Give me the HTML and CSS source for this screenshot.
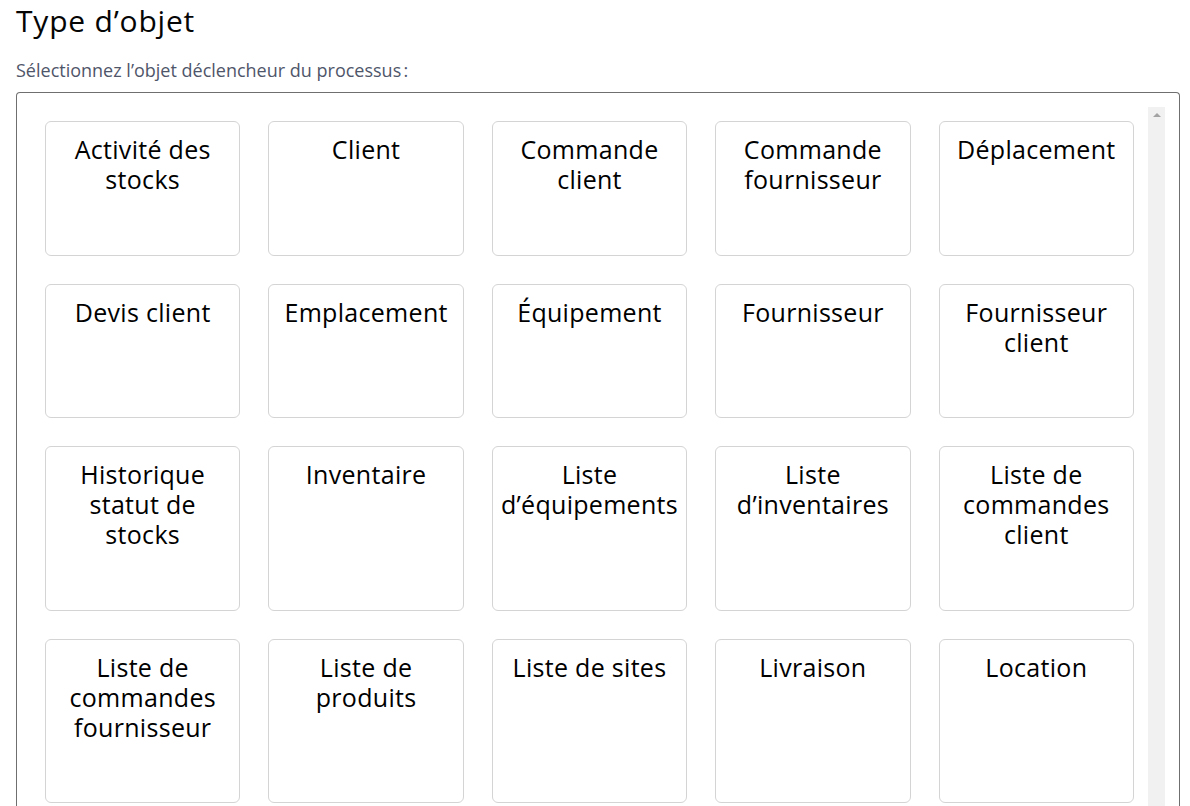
FILE: index.html
```html
<!DOCTYPE html>
<html lang="fr">
<head>
<meta charset="utf-8">
<title>Type d’objet</title>
<link rel="stylesheet" href="styles.css">
</head>
<body>
<div class="page">
  <h1 class="title">Type d’objet</h1>
  <p class="subtitle">Sélectionnez l’objet déclencheur du processus&#8239;:</p>
  <div class="picker">
    <div class="scroller">
      <div class="grid">
        <div class="card">Activité des stocks</div>
        <div class="card">Client</div>
        <div class="card">Commande client</div>
        <div class="card">Commande fournisseur</div>
        <div class="card">Déplacement</div>
        <div class="card">Devis client</div>
        <div class="card">Emplacement</div>
        <div class="card">Équipement</div>
        <div class="card">Fournisseur</div>
        <div class="card">Fournisseur client</div>
        <div class="card">Historique statut de stocks</div>
        <div class="card">Inventaire</div>
        <div class="card">Liste d’équipements</div>
        <div class="card">Liste d’inventaires</div>
        <div class="card">Liste de commandes client</div>
        <div class="card">Liste de commandes fournisseur</div>
        <div class="card">Liste de produits</div>
        <div class="card">Liste de sites</div>
        <div class="card">Livraison</div>
        <div class="card">Location</div>
      </div>
      <div class="scrollbar">
        <span class="scroll-up"></span>
      </div>
    </div>
  </div>
</div>
</body>
</html>
```

FILE: styles.css
```css
html, body {
  margin: 0;
  padding: 0;
  background: #ffffff;
}

body {
  font-family: "Open Sans", "Noto Sans", sans-serif;
  color: #000000;
}

.page {
  height: 806px;
  overflow: hidden;
  padding: 0 10px 0 16px;
  display: flex;
  flex-direction: column;
}

.title {
  margin: 1px 0 0;
  font-size: 30px;
  line-height: 40px;
  font-weight: 400;
  letter-spacing: 0.8px;
  color: #050505;
}

.subtitle {
  margin: 17px 0 10px;
  font-size: 18px;
  line-height: 24px;
  color: #4f566a;
}

.picker {
  flex: 1;
  min-height: 0;
  border: 1px solid #6f6f6f;
  border-bottom: none;
  border-radius: 4px 4px 0 0;
  padding: 14px 14px 0;
  display: flex;
}

.scroller {
  flex: 1;
  display: flex;
  overflow: hidden;
}

.grid {
  flex: 1;
  padding: 14px;
  display: grid;
  grid-template-columns: repeat(5, 1fr);
  gap: 28px;
  align-content: start;
}

.card {
  border: 1px solid #d4d4d4;
  border-radius: 6px;
  padding: 12px 5px 60.5px;
  text-align: center;
  font-size: 25px;
  line-height: 30px;
  letter-spacing: 0.3px;
  color: #000000;
}

.scrollbar {
  width: 17px;
  background: #f1f1f1;
  position: relative;
}

.scroll-up {
  position: absolute;
  top: 6px;
  left: 5px;
  width: 0;
  height: 0;
  border-left: 4px solid transparent;
  border-right: 4px solid transparent;
  border-bottom: 4px solid #a3a3a3;
}
```
